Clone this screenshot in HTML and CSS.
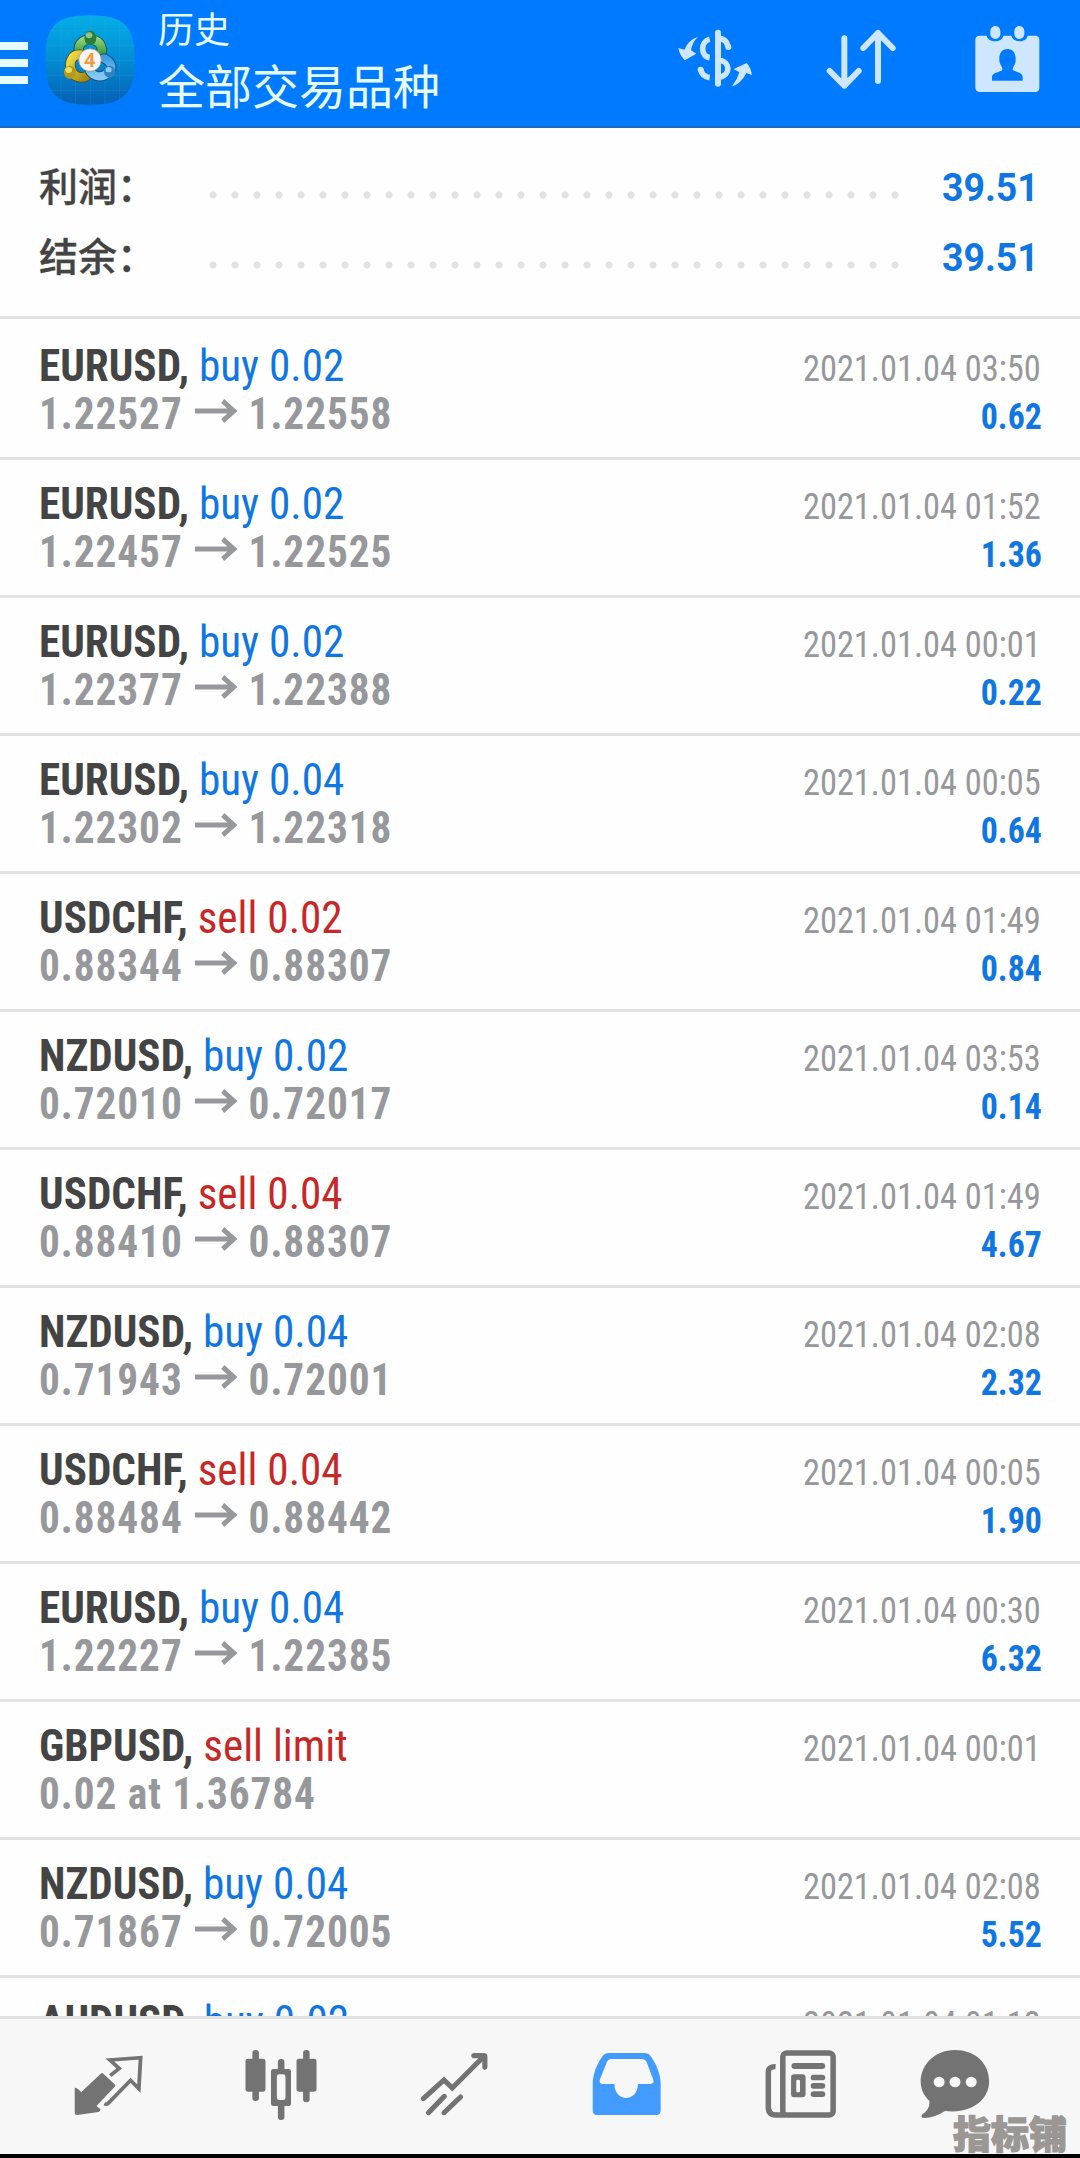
FILE: index.html
```html
<!DOCTYPE html>
<html lang="zh-CN">
<head>
<meta charset="utf-8">
<title>历史</title>
<link rel="stylesheet" href="styles.css">
</head>
<body>
<header class="topbar">
  <div class="menu"><i></i><i></i><i></i></div>
  <svg class="logo" viewBox="135 46 270 270">
    <defs>
      <linearGradient id="sky" x1="0" y1="0" x2="0" y2="1"><stop offset="0" stop-color="#04aee6"/><stop offset=".45" stop-color="#0490d6"/><stop offset="1" stop-color="#0560b4"/></linearGradient>
      <linearGradient id="green" x1="0" y1="0" x2="0" y2="1"><stop offset="0" stop-color="#8ed07a"/><stop offset="1" stop-color="#1f8a2c"/></linearGradient>
      <linearGradient id="gold" x1="0" y1="0" x2="1" y2="1"><stop offset="0" stop-color="#f0de48"/><stop offset="1" stop-color="#a48a10"/></linearGradient>
      <linearGradient id="blue" x1="0" y1="0" x2="0" y2="1"><stop offset="0" stop-color="#3d9fe0"/><stop offset="1" stop-color="#85c8f2"/></linearGradient>
    </defs>
    <path fill="url(#sky)" d="M270 47C372 47 404 79 404 181S372 315 270 315 136 283 136 181 168 47 270 47Z"/>
    <path stroke="#45b5e8" stroke-opacity=".25" stroke-width="2" d="M183 58V304M227 48V314M271 48V314M315 48V314M359 60V302M145 92H395M137 137H403M137 182H403M137 227H403M147 272H393"/>
    <g fill="none" stroke-linecap="round">
      <path stroke="#234b35" stroke-width="31" d="M238 165C230 132 248 120 271 120S314 137 302 175"/>
      <path stroke="url(#green)" stroke-width="26" d="M238 165C230 132 248 120 271 120S314 137 302 175"/>
      <path stroke="#574d18" stroke-width="31" d="M241 165C211 164 204 196 218 219C227 234 246 236 258 230"/>
      <path stroke="url(#gold)" stroke-width="26" d="M241 165C211 164 204 196 218 219C227 234 246 236 258 230"/>
      <path stroke="#174f80" stroke-width="31" d="M312 176C340 190 338 210 323 219C310 234 284 235 270 214"/>
      <path stroke="url(#blue)" stroke-width="25" d="M312 176C340 190 338 210 323 219C310 234 284 235 270 214"/>
    </g>
    <ellipse cx="271" cy="115" rx="18" ry="22" fill="#2b7d3a"/><ellipse cx="267" cy="107" rx="10" ry="9" fill="#8fc58a"/>
    <ellipse cx="210" cy="218" rx="18" ry="20" fill="#b39a1d"/><ellipse cx="206" cy="211" rx="10" ry="9" fill="#eedc69"/>
    <ellipse cx="329" cy="216" rx="17" ry="18" fill="#2f83c5"/><ellipse cx="326" cy="210" rx="9" ry="8" fill="#8bc9f0"/>
    <circle cx="270" cy="181" r="34" fill="#f7f4f1" stroke="#8b8b77" stroke-width="2"/>
    <text x="269" y="202" class="logo-num">4</text>
  </svg>
  <div class="titles"><div class="title-small">历史</div><div class="title-large">全部交易品种</div></div>
  <div class="actions">
    <svg viewBox="105 75 240 210">
      <g fill="none" stroke="#cfe6ff">
        <path stroke-width="18" stroke-linecap="round" d="M234 98V251"/>
        <path stroke-width="17" d="M209 118C181 124 181 169 209 173M236 116C251 116 261 125 264 139M236 180C272 184 274 226 236 232"/>
        <path stroke-width="17" d="M182 209C185 223 195 231 209 233"/>
      </g>
      <circle cx="265" cy="141" r="9" fill="#cfe6ff"/><circle cx="182" cy="209" r="9" fill="#cfe6ff"/>
      <path fill="#cfe6ff" d="M174 110Q156 128 153 151L169 161 134 181Q118 164 115 144L133 149Q145 120 174 110ZM276 259Q292 239 298 217L281 207 320 189Q333 203 336 225L319 219Q302 253 276 259Z"/>
    </svg>
    <svg viewBox="540 75 240 210"><path fill="none" stroke="#cfe6ff" stroke-width="18" stroke-linecap="round" stroke-linejoin="round" d="M613 115V257M569 213L613 257 656 213M714 243V99M670 144L714 99 758 144"/></svg>
    <svg viewBox="980 75 240 210">
      <path fill="#cfe6ff" d="M1016 107H1039C1043 129 1086 129 1089 107H1113C1117 129 1159 129 1162 107H1187Q1197 108 1197 119V264Q1196 276 1185 276H1017Q1006 275 1005 264V119Q1005 108 1016 107Z"/>
      <g fill="#cfe6ff" stroke="#007aff" stroke-width="6"><rect x="1047" y="75" width="36" height="45" rx="18"/><rect x="1119" y="75" width="36" height="45" rx="18"/></g>
      <path fill="#007aff" d="M1101 147C1119 147 1127 160 1126 181C1126 196 1117 199 1117 209C1123 216 1147 216 1147 231V242H1055V231C1055 216 1081 217 1086 209C1087 200 1078 194 1077 181C1076 160 1084 147 1101 147Z"/>
    </svg>
  </div>
</header>

<main class="content">
  <section class="summary">
    <div class="sum"><span class="sum-label">利润：</span><span class="dots"></span><b>39.51</b></div>
    <div class="sum"><span class="sum-label">结余：</span><span class="dots"></span><b>39.51</b></div>
  </section>
  <section class="deals">
    <div class="deal first"><div class="line"><span class="name"><b>EURUSD,</b> <span class="buy">buy 0.02</span></span><span class="date">2021.01.04 03:50</span></div><div class="line"><span class="price">1.22527<svg class="arrow" viewBox="0 0 46 24"><path d="M0 12H42M30 2L42 12 30 22"/></svg>1.22558</span><span class="profit">0.62</span></div></div>
    <div class="deal"><div class="line"><span class="name"><b>EURUSD,</b> <span class="buy">buy 0.02</span></span><span class="date">2021.01.04 01:52</span></div><div class="line"><span class="price">1.22457<svg class="arrow" viewBox="0 0 46 24"><path d="M0 12H42M30 2L42 12 30 22"/></svg>1.22525</span><span class="profit">1.36</span></div></div>
    <div class="deal"><div class="line"><span class="name"><b>EURUSD,</b> <span class="buy">buy 0.02</span></span><span class="date">2021.01.04 00:01</span></div><div class="line"><span class="price">1.22377<svg class="arrow" viewBox="0 0 46 24"><path d="M0 12H42M30 2L42 12 30 22"/></svg>1.22388</span><span class="profit">0.22</span></div></div>
    <div class="deal"><div class="line"><span class="name"><b>EURUSD,</b> <span class="buy">buy 0.04</span></span><span class="date">2021.01.04 00:05</span></div><div class="line"><span class="price">1.22302<svg class="arrow" viewBox="0 0 46 24"><path d="M0 12H42M30 2L42 12 30 22"/></svg>1.22318</span><span class="profit">0.64</span></div></div>
    <div class="deal"><div class="line"><span class="name"><b>USDCHF,</b> <span class="sell">sell 0.02</span></span><span class="date">2021.01.04 01:49</span></div><div class="line"><span class="price">0.88344<svg class="arrow" viewBox="0 0 46 24"><path d="M0 12H42M30 2L42 12 30 22"/></svg>0.88307</span><span class="profit">0.84</span></div></div>
    <div class="deal"><div class="line"><span class="name"><b>NZDUSD,</b> <span class="buy">buy 0.02</span></span><span class="date">2021.01.04 03:53</span></div><div class="line"><span class="price">0.72010<svg class="arrow" viewBox="0 0 46 24"><path d="M0 12H42M30 2L42 12 30 22"/></svg>0.72017</span><span class="profit">0.14</span></div></div>
    <div class="deal"><div class="line"><span class="name"><b>USDCHF,</b> <span class="sell">sell 0.04</span></span><span class="date">2021.01.04 01:49</span></div><div class="line"><span class="price">0.88410<svg class="arrow" viewBox="0 0 46 24"><path d="M0 12H42M30 2L42 12 30 22"/></svg>0.88307</span><span class="profit">4.67</span></div></div>
    <div class="deal"><div class="line"><span class="name"><b>NZDUSD,</b> <span class="buy">buy 0.04</span></span><span class="date">2021.01.04 02:08</span></div><div class="line"><span class="price">0.71943<svg class="arrow" viewBox="0 0 46 24"><path d="M0 12H42M30 2L42 12 30 22"/></svg>0.72001</span><span class="profit">2.32</span></div></div>
    <div class="deal"><div class="line"><span class="name"><b>USDCHF,</b> <span class="sell">sell 0.04</span></span><span class="date">2021.01.04 00:05</span></div><div class="line"><span class="price">0.88484<svg class="arrow" viewBox="0 0 46 24"><path d="M0 12H42M30 2L42 12 30 22"/></svg>0.88442</span><span class="profit">1.90</span></div></div>
    <div class="deal"><div class="line"><span class="name"><b>EURUSD,</b> <span class="buy">buy 0.04</span></span><span class="date">2021.01.04 00:30</span></div><div class="line"><span class="price">1.22227<svg class="arrow" viewBox="0 0 46 24"><path d="M0 12H42M30 2L42 12 30 22"/></svg>1.22385</span><span class="profit">6.32</span></div></div>
    <div class="deal"><div class="line"><span class="name"><b>GBPUSD,</b> <span class="sell">sell limit</span></span><span class="date">2021.01.04 00:01</span></div><div class="line"><span class="price">0.02 at 1.36784</span></div></div>
    <div class="deal"><div class="line"><span class="name"><b>NZDUSD,</b> <span class="buy">buy 0.04</span></span><span class="date">2021.01.04 02:08</span></div><div class="line"><span class="price">0.71867<svg class="arrow" viewBox="0 0 46 24"><path d="M0 12H42M30 2L42 12 30 22"/></svg>0.72005</span><span class="profit">5.52</span></div></div>
    <div class="deal"><div class="line"><span class="name"><b>AUDUSD,</b> <span class="buy">buy 0.02</span></span><span class="date">2021.01.04 01:12</span></div></div>
  </section>
</main>

<nav class="tabs">
  <svg preserveAspectRatio="none" viewBox="197.5 180 232 270"><path fill="#737373" d="M294 280Q297 277 300 281L334 314Q336 317 333 320L280 378 292 388Q291 394 286 396L224 405Q217 405 217 398V323Q223 322 236 336L294 280Z"/><path fill="none" stroke="#737373" stroke-width="11" d="M320 287L346 265 319 240 408 233 403 326 379 301 314 370Q309 374 303 371"/></svg>
  <svg preserveAspectRatio="none" viewBox="700 180 232 270"><g fill="#737373"><rect x="733" y="210" width="19" height="153" rx="9"/><rect x="713" y="236" width="58" height="99" rx="7"/><rect x="880" y="210" width="19" height="157" rx="9"/><rect x="861" y="236" width="58" height="99" rx="7"/><rect x="807" y="237" width="19" height="183" rx="9"/><rect x="787" y="267" width="58" height="111" rx="7"/></g><rect x="804" y="283" width="25" height="77" rx="7" fill="#f7f7f7"/></svg>
  <svg preserveAspectRatio="none" viewBox="1202 180 232 270"><path fill="none" stroke="#737373" stroke-width="15" stroke-linecap="round" d="M1229 356L1289 300 1313 324 1402 232M1244 398L1290 349M1289 398L1337 351"/><path fill="#737373" d="M1377 219H1405Q1415 219 1415 230V262Q1414 270 1407 270 1400 269 1400 262V235H1377Q1368 234 1368 227T1377 219Z"/></svg>
  <svg preserveAspectRatio="none" viewBox="139.4 180 232 270"><path fill="#429bff" fill-rule="evenodd" d="M204 219H308Q318 219 323 227C341 252 353 283 353 312V392Q352 405 340 405H168Q156 404 156 392V312C156 283 168 252 185 228Q191 219 204 219ZM210 237Q202 237 198 244L177 298Q173 311 184 312H219C219 368 287 368 287 312H323Q335 311 332 300L312 245Q308 237 299 237Z"/></svg>
  <svg preserveAspectRatio="none" viewBox="641.8 180 232 270"><g fill="none" stroke="#737373" stroke-width="16"><rect x="705" y="219" width="146" height="186" rx="11"/><path d="M684 260Q663 259 663 277V381Q663 405 685 405H712"/></g><g fill="#737373"><rect x="730" y="249" width="98" height="18" rx="9"/><rect x="729" y="283" width="42" height="69" rx="9"/><rect x="786" y="284" width="42" height="17" rx="8"/><rect x="786" y="309" width="42" height="17" rx="8"/><rect x="786" y="334" width="42" height="17" rx="8"/></g><rect x="744" y="299" width="11" height="38" rx="4" fill="#f7f7f7"/></svg>
  <svg preserveAspectRatio="none" viewBox="1089 180 232 270"><path fill="#737373" d="M1205 210C1265 210 1304 251 1304 304C1304 360 1252 403 1176 393Q1147 413 1115 414C1108 414 1105 407 1111 402Q1132 390 1131 363C1075 310 1116 210 1205 210Z"/><g fill="#f7f7f7"><circle cx="1159" cy="306" r="16"/><circle cx="1205" cy="306" r="16"/><circle cx="1252" cy="306" r="16"/></g></svg>
  <span class="watermark">指标铺</span>
</nav>
</body>
</html>
```

FILE: styles.css
```css
* { box-sizing: border-box; }
body {
  margin: 0;
  width: 1080px;
  height: 2158px;
  display: flex;
  flex-direction: column;
  overflow: hidden;
  background: #fefefe;
  font-family: Roboto, "Noto Sans CJK SC", sans-serif;
}

/* Top bar */
.topbar {
  height: 128px;
  flex: none;
  display: flex;
  background: #007aff;
  border-bottom: 2px solid #1b6bc4;
  color: #e6fbff;
}
.menu {
  width: 28px;
  margin-top: 42px;
  display: flex;
  flex-direction: column;
  gap: 9.5px;
}
.menu i { height: 7.5px; background: #e6fbff; }
.logo { width: 90px; height: 90px; margin: 15px 0 0 17px; }
.logo-num { font: bold 58px "Open Sans", sans-serif; fill: #f09a42; text-anchor: middle; }
.titles { margin-left: 23px; font-family: "Noto Sans CJK SC", sans-serif; white-space: nowrap; }
.title-small { font-size: 36px; line-height: 54px; }
.title-large { font-size: 47px; line-height: 60px; }
.actions { margin: 25px 33px 0 auto; display: flex; gap: 65px; }
.actions svg { width: 80px; height: 70px; }
.actions svg:last-child { margin-left: 2px; }

/* Totals */
.content { flex: 1; min-height: 0; overflow: hidden; }
.summary { height: 188px; padding-top: 23px; }
.sum { height: 70px; display: flex; align-items: center; padding: 0 41px 0 39px; }
.sum-label {
  width: 170px;
  margin-top: -4px;
  font: 500 39px "Noto Sans CJK SC", sans-serif;
  color: #444;
  -webkit-text-stroke: .3px #444;
  white-space: nowrap;
}
.dots {
  width: 704px;
  height: 22px;
  margin-top: 17px;
  background: radial-gradient(circle 4px at 4px 11px, #e2e2e2 3px, transparent 4px) 0 0 / 22px 22px;
}
.sum b { margin-left: auto; margin-top: 4px; font-size: 39px; color: #0f76e2; transform: scaleX(.96); transform-origin: right; }

/* Deals */
.deal {
  height: 138px;
  padding: 16px 39px 0;
  border-top: 3px solid #e3e3e3;
}
.deal.first { height: 141px; padding-top: 19px; }
.line { height: 48px; display: flex; justify-content: space-between; font-stretch: 75%; white-space: pre; }
.name { font-size: 44.5px; line-height: 56px; color: #444; transform: scaleX(.97); transform-origin: left; }
.buy { color: #0f76e2; }
.sell { color: #c62828; }
.date { font-size: 37px; line-height: 62px; color: #97989b; transform: scaleX(.93); transform-origin: right; }
.price { font-size: 44.5px; line-height: 56px; font-weight: 700; color: #97989b; letter-spacing: 1px; transform: scaleX(.928); transform-origin: left; }
.profit { font-size: 37px; line-height: 62px; font-weight: 700; color: #0f76e2; margin-right: -1px; transform: scaleX(.915); transform-origin: right; }
.arrow { width: 46px; height: 24px; margin: 0 12px 0 13px; vertical-align: 6px; fill: none; stroke: #97989b; stroke-width: 5; }

/* Bottom tabs */
.tabs {
  position: relative;
  flex: none;
  height: 142px;
  padding: 21px 0 0 68px;
  display: flex;
  gap: 93px;
  background: #f7f7f7;
  border-top: 3px solid #e3e3e3;
  border-bottom: 4px solid #000;
}
.tabs svg { flex: none; width: 80px; height: 90px; }
.tabs svg:nth-of-type(5) { margin-left: 1px; }
.tabs svg:nth-of-type(6) { margin-left: -19px; }
.watermark {
  position: absolute;
  right: 13px;
  bottom: 4px;
  font: 900 38px/36px "Noto Sans CJK SC", sans-serif;
  color: #9b9794;
  -webkit-text-stroke: 1.2px #9b9794;
}
```
